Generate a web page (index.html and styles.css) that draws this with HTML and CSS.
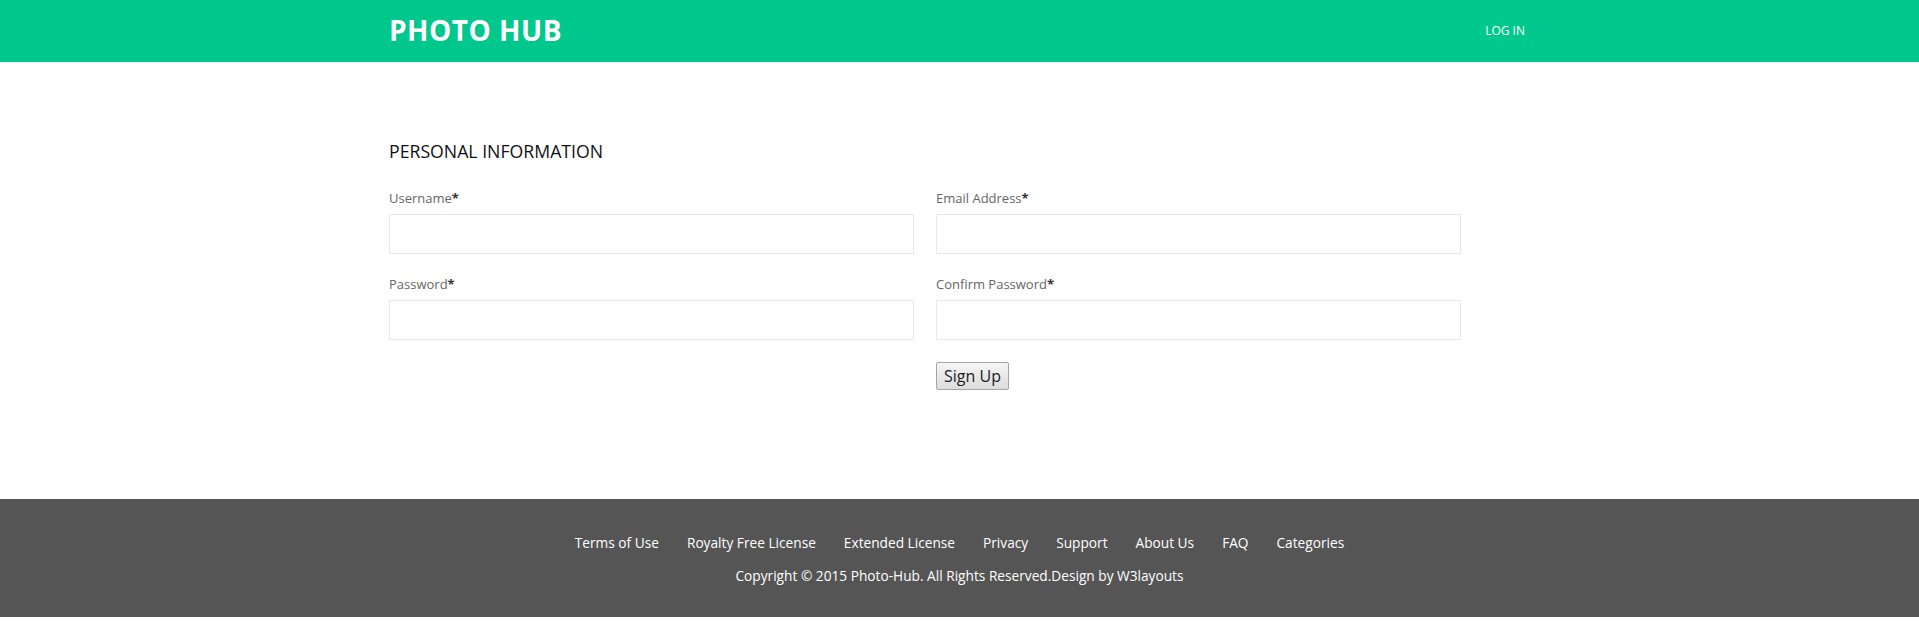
FILE: index.html
```html
<!DOCTYPE html>
<html lang="en">
<head>
<meta charset="utf-8">
<title>Photo Hub - Sign Up</title>
<link rel="stylesheet" href="styles.css">
</head>
<body>
<header class="header">
  <div class="container header-inner">
    <a class="logo" href="#">PHOTO HUB</a>
    <nav class="nav"><a href="#">LOG IN</a></nav>
  </div>
</header>

<main class="main">
  <div class="container">
    <h3 class="section-title">PERSONAL INFORMATION</h3>
    <form class="form">
      <div class="field">
        <label class="label">Username<span class="req">*</span></label>
        <input class="input" type="text">
      </div>
      <div class="field">
        <label class="label">Email Address<span class="req">*</span></label>
        <input class="input" type="text">
      </div>
      <div class="field">
        <label class="label">Password<span class="req">*</span></label>
        <input class="input" type="password">
      </div>
      <div class="field">
        <label class="label">Confirm Password<span class="req">*</span></label>
        <input class="input" type="password">
      </div>
      <div class="field"></div>
      <div class="field">
        <button class="btn" type="button">Sign Up</button>
      </div>
    </form>
  </div>
</main>

<footer class="footer">
  <ul class="footer-links">
    <li><a href="#">Terms of Use</a></li>
    <li><a href="#">Royalty Free License</a></li>
    <li><a href="#">Extended License</a></li>
    <li><a href="#">Privacy</a></li>
    <li><a href="#">Support</a></li>
    <li><a href="#">About Us</a></li>
    <li><a href="#">FAQ</a></li>
    <li><a href="#">Categories</a></li>
  </ul>
  <p class="copyright">Copyright © 2015 Photo-Hub. All Rights Reserved.Design by <a href="#">W3layouts</a></p>
</footer>
</body>
</html>
```

FILE: styles.css
```css
* { box-sizing: border-box; }

html, body {
  margin: 0;
  padding: 0;
  background: #fff;
}

body {
  font-family: "Open Sans", "Liberation Sans", sans-serif;
  color: #333;
}

a { text-decoration: none; color: inherit; }

.container {
  width: 1141px;
  margin: 0 auto;
}

/* Header */
.header {
  background: #00c78c;
  height: 62px;
}

.header-inner {
  height: 100%;
  display: flex;
  align-items: center;
  justify-content: space-between;
}

.logo {
  font-family: "Open Sans", "Liberation Sans", sans-serif;
  font-weight: 700;
  font-size: 28px;
  line-height: 38px;
  letter-spacing: 0.5px;
  color: #fff;
  margin-top: -3px;
}

.nav a {
  display: block;
  font-size: 12px;
  line-height: 16px;
  color: #fff;
  padding-right: 5px;
}

/* Main */
.main {
  padding: 77px 0 109px;
}

.section-title {
  margin: 0 0 25px;
  font-size: 17.7px;
  font-weight: 400;
  line-height: 25px;
  color: #111;
}

.form {
  display: grid;
  grid-template-columns: 525px 525px;
  column-gap: 22px;
  row-gap: 21px;
}

.field {
  display: flex;
  flex-direction: column;
  align-items: flex-start;
}

.label {
  font-size: 13px;
  line-height: 18px;
  color: #666;
  margin-bottom: 7px;
}

.req {
  color: #333;
  font-weight: 700;
}

.input {
  width: 100%;
  height: 40px;
  border: 1px solid #e8e8e8;
  background: #fff;
  padding: 0 10px;
  font-family: inherit;
  font-size: 14px;
  outline: none;
}

.btn {
  height: 28px;
  padding: 0 7px;
  font-family: "Open Sans", "Liberation Sans", sans-serif;
  font-size: 16px;
  line-height: 24px;
  color: #222;
  background: linear-gradient(#f5f5f5, #dcdcdc);
  border: 1px solid #a6a6a6;
  border-radius: 2px;
  margin-top: 1px;
}

/* Footer */
.footer {
  background: #555;
  padding: 34px 0 31px;
  margin-bottom: 5px;
  text-align: center;
  color: #fff;
}

.footer-links {
  list-style: none;
  margin: 0;
  padding: 0;
  display: flex;
  justify-content: center;
  gap: 28px;
  font-size: 13.7px;
  line-height: 20px;
}

.copyright {
  margin: 13px 0 0;
  font-size: 13.7px;
  line-height: 20px;
}
```
